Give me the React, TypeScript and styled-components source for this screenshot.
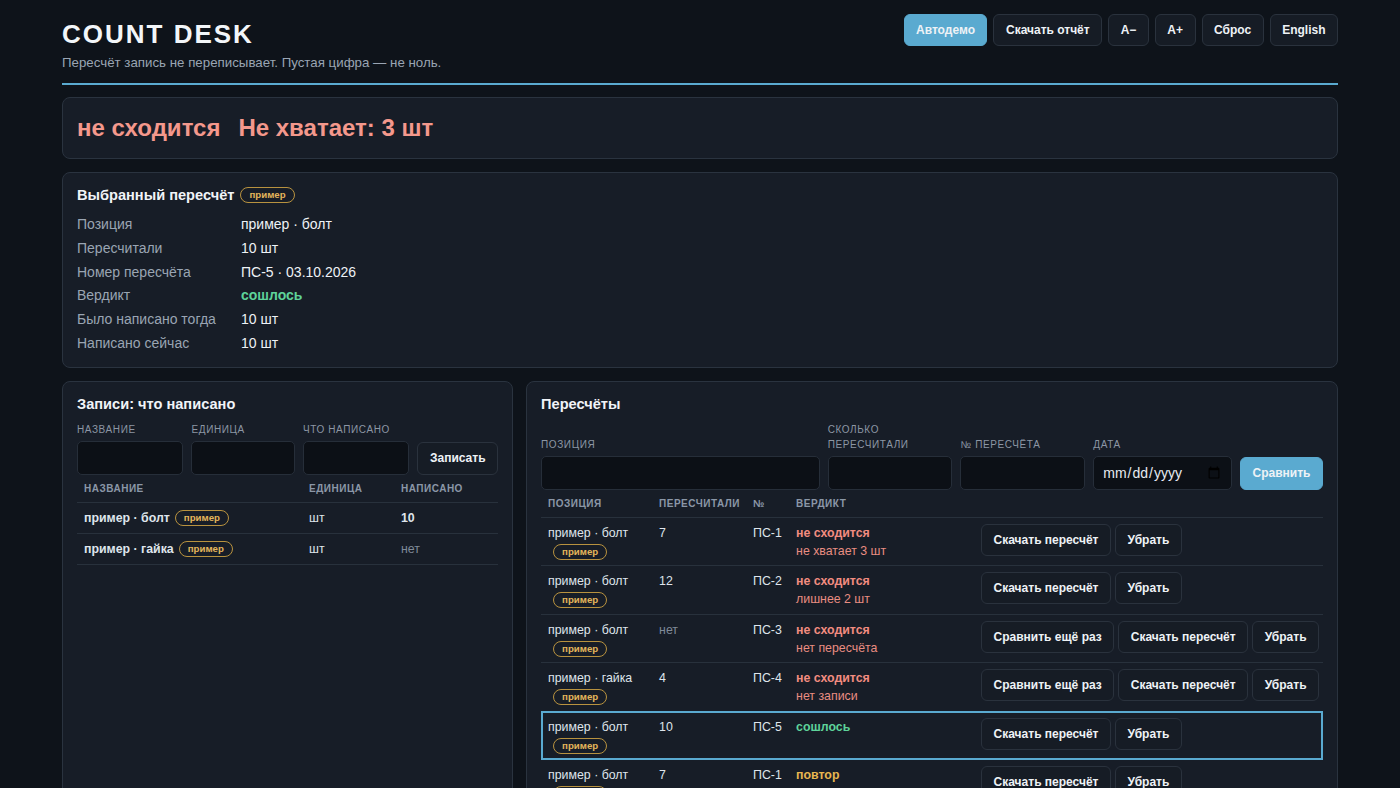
import React from 'react';
import styled, { createGlobalStyle } from 'styled-components';

const GlobalStyle = createGlobalStyle`
  * { box-sizing: border-box; }
  body {
    margin: 0;
    background: #0e131a;
    color: #e6ebf1;
    font-family: 'Liberation Sans', Arial, sans-serif;
  }
`;

type Verdict = 'bad' | 'ok' | 'repeat';

const recounts: {
  name: string;
  counted: string | null;
  no: string;
  verdict: Verdict;
  note?: string;
  again?: boolean;
  selected?: boolean;
}[] = [
  { name: 'пример · болт', counted: '7', no: 'ПС-1', verdict: 'bad', note: 'не хватает 3 шт' },
  { name: 'пример · болт', counted: '12', no: 'ПС-2', verdict: 'bad', note: 'лишнее 2 шт' },
  { name: 'пример · болт', counted: null, no: 'ПС-3', verdict: 'bad', note: 'нет пересчёта', again: true },
  { name: 'пример · гайка', counted: '4', no: 'ПС-4', verdict: 'bad', note: 'нет записи', again: true },
  { name: 'пример · болт', counted: '10', no: 'ПС-5', verdict: 'ok', selected: true },
  { name: 'пример · болт', counted: '7', no: 'ПС-1', verdict: 'repeat' },
];

const verdictText: Record<Verdict, string> = {
  bad: 'не сходится',
  ok: 'сошлось',
  repeat: 'повтор',
};

const details = [
  { label: 'Позиция', value: 'пример · болт' },
  { label: 'Пересчитали', value: '10 шт' },
  { label: 'Номер пересчёта', value: 'ПС-5 · 03.10.2026' },
  { label: 'Вердикт', value: 'сошлось', verdict: 'ok' as Verdict },
  { label: 'Было написано тогда', value: '10 шт' },
  { label: 'Написано сейчас', value: '10 шт' },
];

export default function App() {
  return (
    <>
      <GlobalStyle />
      <Page>
        <Header>
          <div>
            <Title>COUNT DESK</Title>
            <Subtitle>Пересчёт запись не переписывает. Пустая цифра — не ноль.</Subtitle>
          </div>
          <Toolbar>
            <Button $primary>Автодемо</Button>
            <Button>Скачать отчёт</Button>
            <Button>A−</Button>
            <Button>A+</Button>
            <Button>Сброс</Button>
            <Button>English</Button>
          </Toolbar>
        </Header>

        <Main>
          <StatusCard>
            <StatusText>не сходится</StatusText>
            <StatusText>Не хватает: 3 шт</StatusText>
          </StatusCard>

          <Card>
            <CardTitle>
              Выбранный пересчёт
              <Badge>пример</Badge>
            </CardTitle>
            <DetailList>
              {details.map((d) => (
                <DetailRow key={d.label}>
                  <DetailLabel>{d.label}</DetailLabel>
                  {d.verdict ? (
                    <VerdictLabel $kind={d.verdict}>{d.value}</VerdictLabel>
                  ) : (
                    <span>{d.value}</span>
                  )}
                </DetailRow>
              ))}
            </DetailList>
          </Card>

          <Columns>
            <Card>
              <CardTitle>Записи: что написано</CardTitle>
              <Form>
                <Field $width="107px">
                  <FieldLabel>Название</FieldLabel>
                  <Input />
                </Field>
                <Field $width="104px">
                  <FieldLabel>Единица</FieldLabel>
                  <Input />
                </Field>
                <Field $width="107px">
                  <FieldLabel>Что написано</FieldLabel>
                  <Input />
                </Field>
                <Button $tall>Записать</Button>
              </Form>
              <Table>
                <thead>
                  <tr>
                    <Th $width="225px">Название</Th>
                    <Th $width="92px">Единица</Th>
                    <Th>Написано</Th>
                  </tr>
                </thead>
                <tbody>
                  <tr>
                    <Td>
                      <NameCell>
                        <strong>пример · болт</strong>
                        <Badge>пример</Badge>
                      </NameCell>
                    </Td>
                    <Td>шт</Td>
                    <Td>
                      <strong>10</strong>
                    </Td>
                  </tr>
                  <tr>
                    <Td>
                      <NameCell>
                        <strong>пример · гайка</strong>
                        <Badge>пример</Badge>
                      </NameCell>
                    </Td>
                    <Td>шт</Td>
                    <Td>
                      <Muted>нет</Muted>
                    </Td>
                  </tr>
                </tbody>
              </Table>
            </Card>

            <Card>
              <CardTitle>Пересчёты</CardTitle>
              <Form>
                <Field $width="279px">
                  <FieldLabel>Позиция</FieldLabel>
                  <Input />
                </Field>
                <Field $width="125px">
                  <FieldLabel>Сколько пересчитали</FieldLabel>
                  <Input />
                </Field>
                <Field $width="125px">
                  <FieldLabel>№ пересчёта</FieldLabel>
                  <Input />
                </Field>
                <Field $width="139px">
                  <FieldLabel>Дата</FieldLabel>
                  <Input type="date" />
                </Field>
                <Button $primary $tall>
                  Сравнить
                </Button>
              </Form>
              <Table>
                <thead>
                  <tr>
                    <Th $width="111px">Позиция</Th>
                    <Th $width="94px">Пересчитали</Th>
                    <Th $width="43px">№</Th>
                    <Th $width="185px">Вердикт</Th>
                    <Th />
                  </tr>
                </thead>
                <tbody>
                  {recounts.map((r, i) => (
                    <Row key={i} $selected={r.selected}>
                      <RecountTd>
                        <NameCell>
                          <span>{r.name}</span>
                          <Badge>пример</Badge>
                        </NameCell>
                      </RecountTd>
                      <RecountTd>{r.counted ?? <Muted>нет</Muted>}</RecountTd>
                      <RecountTd>{r.no}</RecountTd>
                      <RecountTd>
                        <VerdictLabel $kind={r.verdict}>{verdictText[r.verdict]}</VerdictLabel>
                        {r.note && <VerdictNote>{r.note}</VerdictNote>}
                      </RecountTd>
                      <ActionCell>
                        <Actions>
                          {r.again && <Button>Сравнить ещё раз</Button>}
                          <Button>Скачать пересчёт</Button>
                          <Button>Убрать</Button>
                        </Actions>
                      </ActionCell>
                    </Row>
                  ))}
                </tbody>
              </Table>
            </Card>
          </Columns>
        </Main>
      </Page>
    </>
  );
}

const Page = styled.div`
  max-width: 1276px;
  margin: 0 auto;
`;

const Header = styled.header`
  display: flex;
  justify-content: space-between;
  align-items: flex-start;
  padding: 14px 0 12px;
  border-bottom: 2px solid #5aaad0;
`;

const Title = styled.h1`
  margin: 4px 0 0;
  font-size: 26px;
  line-height: 32px;
  font-weight: 700;
  letter-spacing: 2px;
  color: #f3f6f9;
`;

const Subtitle = styled.div`
  margin-top: 5px;
  font-size: 13.3px;
  line-height: 16px;
  color: #9aa5b3;
`;

const Toolbar = styled.div`
  display: flex;
  gap: 6px;
`;

const Button = styled.button<{ $primary?: boolean; $tall?: boolean }>`
  height: ${(p) => (p.$tall ? '33px' : '32px')};
  padding: 0 11.5px;
  border-radius: 6px;
  border: 1px solid ${(p) => (p.$primary ? '#5aaad0' : '#2a323d')};
  background: ${(p) => (p.$primary ? '#5aaad0' : '#161c25')};
  color: #eef2f6;
  font-family: inherit;
  font-size: 12px;
  font-weight: 700;
  white-space: nowrap;
  cursor: pointer;
`;

const Main = styled.main`
  display: flex;
  flex-direction: column;
  gap: 13px;
  padding-top: 12px;
`;

const Card = styled.section`
  background: #171d27;
  border: 1px solid #2a333f;
  border-radius: 8px;
  padding: 12px 14px 11px;
`;

const StatusCard = styled(Card)`
  display: flex;
  gap: 18px;
  padding: 14px;
`;

const StatusText = styled.div`
  font-size: 24px;
  line-height: 32px;
  font-weight: 700;
  color: #f4988c;
`;

const CardTitle = styled.h2`
  display: flex;
  align-items: center;
  gap: 1px;
  margin: 0;
  font-size: 14.6px;
  line-height: 20px;
  font-weight: 700;
  color: #f1f4f8;
`;

const Badge = styled.span`
  display: inline-flex;
  align-items: center;
  height: 16px;
  margin-left: 5px;
  padding: 0 8px;
  border: 1px solid #b8923f;
  border-radius: 999px;
  font-size: 9.7px;
  font-weight: 700;
  color: #e3b55b;
  white-space: nowrap;
`;

const DetailList = styled.div`
  margin-top: 8px;
`;

const DetailRow = styled.div`
  display: grid;
  grid-template-columns: 164px 1fr;
  font-size: 14px;
  line-height: 23.8px;
  color: #eef2f6;
`;

const DetailLabel = styled.span`
  color: #9aa5b3;
`;

const VerdictLabel = styled.span<{ $kind: Verdict }>`
  display: block;
  font-weight: 700;
  color: ${(p) => (p.$kind === 'ok' ? '#5ed39a' : p.$kind === 'repeat' ? '#e8b650' : '#f28c80')};
`;

const VerdictNote = styled.div`
  margin-top: 2px;
  color: #e98d82;
`;

const Columns = styled.div`
  display: grid;
  grid-template-columns: minmax(0, 1fr) minmax(0, 1.8fr);
  gap: 13px;
  align-items: stretch;
  min-height: 440px;
`;

const Form = styled.div`
  display: flex;
  align-items: flex-end;
  gap: 8px;
  margin-top: 8px;
`;

const Field = styled.label<{ $width: string }>`
  display: flex;
  flex-direction: column;
  gap: 4px;
  width: ${(p) => p.$width};
`;

const FieldLabel = styled.span`
  font-size: 10px;
  line-height: 15px;
  letter-spacing: 0.6px;
  text-transform: uppercase;
  color: #8c96a4;
`;

const Input = styled.input`
  width: 100%;
  height: 34px;
  padding: 0 8px;
  background: #0c1016;
  border: 1px solid #262e39;
  border-radius: 5px;
  color: #e6ebf1;
  font-family: inherit;
  font-size: 14px;
`;

const Table = styled.table`
  width: 100%;
  border-collapse: collapse;
  table-layout: fixed;
  font-size: 12.35px;
  color: #dfe5ec;
`;

const Th = styled.th<{ $width?: string }>`
  width: ${(p) => p.$width ?? 'auto'};
  padding: 8px 7px 7px;
  text-align: left;
  font-size: 10px;
  line-height: 12px;
  font-weight: 700;
  letter-spacing: 0.5px;
  text-transform: uppercase;
  color: #8b97a7;
  border-bottom: 1px solid #28313c;
`;

const Row = styled.tr<{ $selected?: boolean }>`
  outline: ${(p) => (p.$selected ? '2px solid #5aaad0' : 'none')};
  outline-offset: -2px;
`;

const Td = styled.td`
  padding: 7px;
  line-height: 16px;
  vertical-align: top;
  border-bottom: 1px solid #28313c;
`;

const RecountTd = styled(Td)`
  padding-bottom: 5.5px;
`;

const ActionCell = styled(Td)`
  padding: 6px 7px 5px;
`;

const NameCell = styled.div`
  display: flex;
  flex-wrap: wrap;
  align-items: center;
  row-gap: 3px;
`;

const Muted = styled.span`
  color: #7f8a98;
`;

const Actions = styled.div`
  display: flex;
  gap: 4px;
`;
